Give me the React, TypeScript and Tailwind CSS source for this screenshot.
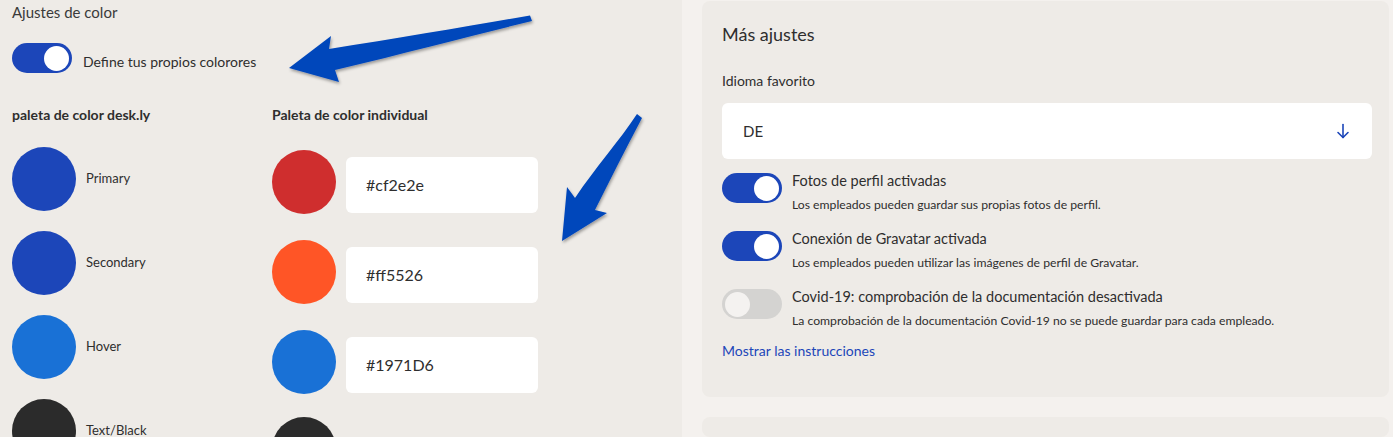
import React from "react";

const font = { fontFamily: "Lato, 'Open Sans', sans-serif" };

function Toggle({ on }: { on: boolean }) {
  return (
    <div
      className={`w-[60px] h-[30px] rounded-full flex items-center px-[3px] shrink-0 ${
        on ? "bg-[#1c46b9] justify-end" : "bg-[#d4d3d1] justify-start"
      }`}
    >
      <div className={`w-[25px] h-[25px] rounded-full ${on ? "bg-white" : "bg-[#f4f2f0]"}`} />
    </div>
  );
}

function Row({ on, title, sub }: { on: boolean; title: string; sub: string }) {
  return (
    <div className="flex items-start gap-[10px]">
      <div className="mt-[2px]">
        <Toggle on={on} />
      </div>
      <div className="flex flex-col">
        <div className="text-[14.5px] leading-[20px] text-[#2e2e2e]">{title}</div>
        <div className="mt-[6px] text-[12.2px] leading-[16px] text-[#2e2e2e]">{sub}</div>
      </div>
    </div>
  );
}

export default function App() {
  const left = [
    { c: "bg-[#1c46b9]", l: "Primary" },
    { c: "bg-[#1c46b9]", l: "Secondary" },
    { c: "bg-[#1971d6]", l: "Hover" },
    { c: "bg-[#2b2b2b]", l: "Text/Black" },
  ];
  const right = [
    { c: "bg-[#cf2e2e]", v: "#cf2e2e" },
    { c: "bg-[#ff5526]", v: "#ff5526" },
    { c: "bg-[#1971d6]", v: "#1971D6" },
    { c: "bg-[#2b2b2b]", v: "" },
  ];
  return (
    <div className="relative w-[1393px] h-[437px] overflow-hidden bg-[#f4f1ee] flex text-[#2e2e2e]" style={font}>
      {/* Left panel */}
      <div className="w-[682px] h-full bg-[#eeebe7] px-3 pt-[2px] shrink-0">
        <div className="text-[15px] leading-[20px] text-[#3a3a3a]">Ajustes de color</div>
        <div className="mt-[21px] flex items-center gap-[11px]">
          <Toggle on={true} />
          <span className="pt-[6px] text-[14px] text-[#2e2e2e]">Define tus propios colorores</span>
        </div>
        <div className="mt-[32px] flex">
          <div className="w-[260px] shrink-0">
            <div className="text-[14px] leading-[20px] font-bold">paleta de color desk.ly</div>
            <div className="mt-[22px] flex flex-col gap-[20px]">
              {left.map((x) => (
                <div key={x.l} className="flex items-center gap-[10px]">
                  <div className={`w-16 h-16 rounded-full ${x.c}`} />
                  <span className="text-[13px] text-[#2e2e2e]">{x.l}</span>
                </div>
              ))}
            </div>
          </div>
          <div>
            <div className="text-[14px] leading-[20px] font-bold">Paleta de color individual</div>
            <div className="mt-[25px] flex flex-col gap-[26px]">
              {right.map((x, i) => (
                <div key={i} className={`flex items-start gap-[10px] ${i === 3 ? "-mt-[3px]" : ""}`}>
                  <div className={`w-16 h-16 rounded-full ${x.c}`} />
                  {x.v && (
                    <div className="mt-[7px] w-[192px] h-[56px] rounded-md bg-white flex items-center pl-5 text-[16px] text-[#2e2e2e]">
                      {x.v}
                    </div>
                  )}
                </div>
              ))}
            </div>
          </div>
        </div>
      </div>

      {/* Right column */}
      <div className="ml-[20px] w-[687px] flex flex-col gap-[20px] pt-[1px]">
        <div className="bg-[#eeebe7] rounded-lg px-5 pt-[19px] pb-[36px]">
          <div className="text-[18px] leading-[28px] text-[#2e2e2e]">Más ajustes</div>
          <div className="mt-[23px] text-[14px] leading-[20px]">Idioma favorito</div>
          <div className="mt-[12px] w-[650px] h-[56px] bg-white rounded-md flex items-center justify-between pl-[21px] pr-[22px]">
            <span className="text-[15px]">DE</span>
            <svg width="14" height="16" viewBox="0 0 14 16" fill="none" stroke="#1c46b9" strokeWidth="1.6" strokeLinecap="round" strokeLinejoin="round">
              <path d="M7 1.5V14.5" />
              <path d="M2 9.5L7 14.5L12 9.5" />
            </svg>
          </div>
          <div className="mt-[12px] flex flex-col gap-[16px]">
            <Row on={true} title="Fotos de perfil activadas" sub="Los empleados pueden guardar sus propias fotos de perfil." />
            <Row on={true} title="Conexión de Gravatar activada" sub="Los empleados pueden utilizar las imágenes de perfil de Gravatar." />
            <Row
              on={false}
              title="Covid-19: comprobación de la documentación desactivada"
              sub="La comprobación de la documentación Covid-19 no se puede guardar para cada empleado."
            />
          </div>
          <div className="mt-[12px] text-[14px] leading-[20px] text-[#1c46b9]">Mostrar las instrucciones</div>
        </div>
        <div className="bg-[#eeebe7] rounded-lg h-[100px]" />
      </div>

      {/* Annotation arrows */}
      <svg className="absolute inset-0 pointer-events-none" width="1393" height="437" viewBox="0 0 1393 437">
        <defs>
          <filter id="sh" x="-20%" y="-20%" width="140%" height="140%">
            <feDropShadow dx="1" dy="2" stdDeviation="1.5" floodColor="#000" floodOpacity="0.35" />
          </filter>
        </defs>
        <path
          d="M530 15.5 C 470 26, 400 38, 329 49 L 331 36 L 289 68 L 339 82 L 335 70 C 410 52, 470 36, 532 21 Z"
          fill="#0047bb"
          filter="url(#sh)"
        />
        <path
          d="M637 114 C 620 140, 595 168, 575 198 L 567 187 L 562 241 L 607 213 L 595 210 C 610 180, 625 150, 642 118 Z"
          fill="#0047bb"
          filter="url(#sh)"
        />
      </svg>
    </div>
  );
}
